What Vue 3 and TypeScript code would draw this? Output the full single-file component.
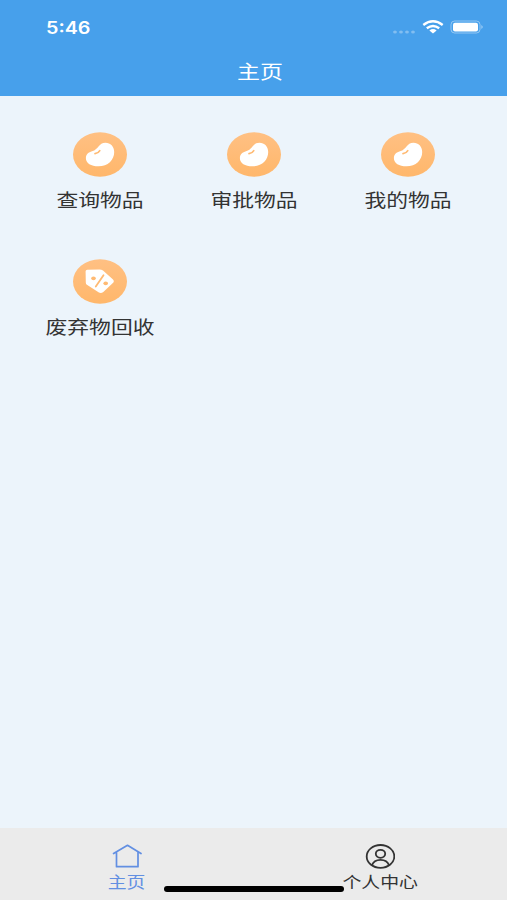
<script setup lang="ts">
interface Entry {
  label: string
  icon: 'bean' | 'tag'
}

const entries: Entry[] = [
  { label: '查询物品', icon: 'bean' },
  { label: '审批物品', icon: 'bean' },
  { label: '我的物品', icon: 'bean' },
  { label: '废弃物回收', icon: 'tag' },
]
</script>

<template>
  <div class="screen">
    <header class="header">
      <div class="status">
        <span class="time"><span class="wide">5:46</span></span>
        <div class="signals">
          <svg class="dots" width="24" height="6" viewBox="0 0 24 6">
            <g fill="#fff" opacity=".32">
              <ellipse cx="3" cy="3" rx="1.9" ry="1.6" />
              <ellipse cx="9" cy="3" rx="1.9" ry="1.6" />
              <ellipse cx="15" cy="3" rx="1.9" ry="1.6" />
              <ellipse cx="21" cy="3" rx="1.9" ry="1.6" />
            </g>
          </svg>
          <svg class="wifi" width="22" height="14" viewBox="0 0 22 14">
            <g fill="none" stroke="#fff" stroke-width="2.4">
              <path d="M1.3 5Q11-2.4 20.7 5" />
              <path d="M4.8 8.3Q11 3.6 17.2 8.3" />
            </g>
            <path d="M7.4 10.4Q11 7.7 14.6 10.4L11 13.5Z" fill="#fff" />
          </svg>
          <svg class="battery" width="34" height="14" viewBox="0 0 34 14">
            <rect x="1" y="1" width="29" height="12" rx="3.6" fill="none" stroke="#fff" stroke-opacity=".42" />
            <rect x="3" y="2.8" width="25" height="8.6" rx="2" fill="#fff" />
            <path d="M31.4 5Q34 7 31.4 9Z" fill="#fff" opacity=".5" />
          </svg>
        </div>
      </div>
      <h1 class="title"><span class="wide">主页</span></h1>
    </header>

    <main class="grid">
      <div v-for="entry in entries" :key="entry.label" class="entry">
        <svg class="badge" width="54" height="45" viewBox="0 0 54 45">
          <defs>
            <linearGradient id="badge-fill" x1="0" y1="0" x2="0" y2="1">
              <stop offset="0" stop-color="#ffc083" />
              <stop offset="1" stop-color="#ffb76b" />
            </linearGradient>
          </defs>
          <ellipse cx="27" cy="22.5" rx="27" ry="22.3" fill="url(#badge-fill)" />
          <template v-if="entry.icon === 'bean'">
            <path
              d="M32.5 10.7C37.5 10.7 41.2 14.5 41.2 20C41.2 28 35 34.3 25.5 34.3C18 34.3 12.9 31.2 12.9 26.2C12.9 22 15.7 20.3 19 19.3C26 17.2 25.5 10.7 32.5 10.7Z"
              fill="#fff"
            />
            <path d="M22 21.6Q25.5 21.2 26.8 18.7" fill="none" stroke="#ffba73" stroke-width="1.7" stroke-linecap="round" />
          </template>
          <template v-else>
            <path
              d="M14.3 10.7L26.5 10.6Q28.5 10.6 30 11.6L40 20.6Q41.6 22 40.4 23.6L30.3 33Q28.2 34.7 25.9 33.6L13.9 25.8Q12.8 25 12.8 23.4L12.6 12.2Q12.6 10.8 14.3 10.7Z"
              fill="#fff"
            />
            <path d="M30.5 16.2L22.8 27.6" stroke="#ffba73" stroke-width="1.8" stroke-linecap="round" />
            <ellipse cx="20.5" cy="19.3" rx="2.3" ry="1.9" fill="#ffba73" />
            <ellipse cx="32.7" cy="24.3" rx="2.3" ry="1.9" fill="#ffba73" />
          </template>
        </svg>
        <span class="label"><span class="wide">{{ entry.label }}</span></span>
      </div>
    </main>

    <nav class="tabs">
      <div class="tab active">
        <svg width="30" height="26" viewBox="0 0 30 26" fill="none" stroke="currentColor" stroke-width="1.7" stroke-linecap="round" stroke-linejoin="round">
          <path d="M1.6 10.5L15.5 2.3L29 10.5M4.5 9.5V23.7H26V9.5" />
        </svg>
        <span class="tab-label"><span class="wide">主页</span></span>
      </div>
      <div class="tab">
        <svg width="30" height="26" viewBox="0 0 30 26" fill="none" stroke="currentColor" stroke-width="1.8">
          <ellipse cx="15.5" cy="13.4" rx="13.8" ry="11.4" />
          <ellipse cx="15.5" cy="10.8" rx="4.7" ry="4" />
          <path d="M7 22.2C9.3 15 21.7 15 24 22.2" />
        </svg>
        <span class="tab-label"><span class="wide">个人中心</span></span>
      </div>
      <div class="home-indicator"></div>
    </nav>
  </div>
</template>

<style>
body {
  margin: 0;
}
</style>

<style scoped>
.screen {
  display: flex;
  flex-direction: column;
  height: 900px;
  background: #ecf4fb;
  color: #333;
  font-family: "Noto Sans CJK SC", sans-serif;
  overflow: hidden;
}

.wide {
  display: inline-block;
  white-space: nowrap;
  transform: scaleX(1.21);
}

.header {
  height: 96px;
  flex: none;
  background: #47a0eb;
  color: #fff;
}

.status {
  display: flex;
  justify-content: space-between;
  height: 53px;
  box-sizing: border-box;
  padding: 17px 23px 0 46px;
}

.time {
  padding-top: 1px;
  font: 600 17px/21px Inter, sans-serif;
}

.time .wide {
  transform-origin: left;
  transform: scaleX(1.16);
}

.signals {
  display: flex;
  align-items: flex-start;
  padding-top: 3px;
}

.dots {
  margin: 9px 6px 0 0;
}

.wifi {
  margin-right: 6px;
}

.title {
  margin: 0;
  padding-left: 13px;
  text-align: center;
  font-size: 19px;
  line-height: 36px;
  font-weight: 400;
}

.grid {
  flex: 1;
  display: grid;
  grid-template-columns: repeat(3, 154.3px);
  grid-auto-rows: 127px;
  align-content: start;
  padding: 36px 22px 0 22.5px;
}

.entry {
  display: flex;
  flex-direction: column;
  align-items: center;
}

.label {
  margin-top: 7px;
  font-size: 18px;
  line-height: 30px;
}

.tabs {
  position: relative;
  display: flex;
  flex: none;
  height: 72px;
  background: #ebebeb;
}

.tab {
  flex: 1;
  display: flex;
  flex-direction: column;
  align-items: center;
  padding-top: 15px;
}

.tab.active {
  color: #628fe2;
}

.tab-label {
  font-size: 15.6px;
  line-height: 24px;
}

.home-indicator {
  position: absolute;
  left: 164px;
  bottom: 8.5px;
  width: 180px;
  height: 5.5px;
  border-radius: 3px;
  background: #000;
}
</style>
